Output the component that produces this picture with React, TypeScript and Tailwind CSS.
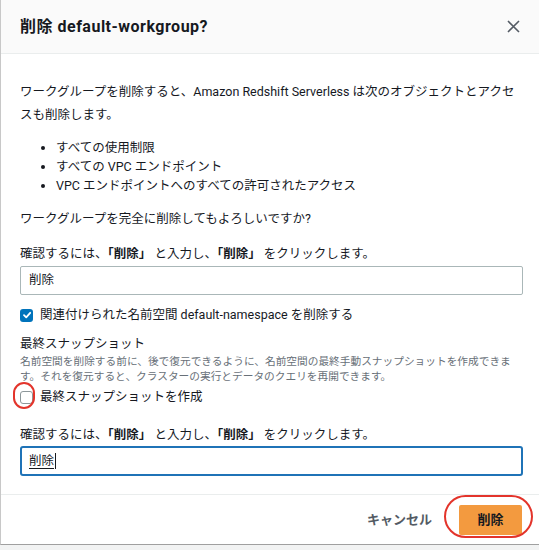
import React from "react";

const font = { fontFamily: 'Roboto, "Noto Sans CJK JP", sans-serif' };

function Check() {
  return (
    <span className="flex h-[13px] w-[13px] items-center justify-center rounded-[3px] bg-[#0073bb]">
      <svg width="10" height="10" viewBox="0 0 10 10">
        <path d="M2 5.2 L4.2 7.3 L8.2 2.8" fill="none" stroke="white" strokeWidth="1.8" strokeLinecap="round" strokeLinejoin="round" />
      </svg>
    </span>
  );
}

export default function App() {
  return (
    <div className="relative h-[550px] w-[539px] overflow-hidden bg-[#f2f3f3] text-[#16191f]" style={font}>
      <div className="flex h-[545px] flex-col border-b border-l border-b-[#a0a0a0] border-l-[#c8c8c8] bg-white">
        <div className="flex h-[54px] shrink-0 items-center justify-between border-b border-[#eaeded] bg-[#fafafa] pl-[19px] pr-[18px]">
          <h2 className="text-[16px] font-bold leading-[22px] tracking-[0.5px]">削除 default-workgroup?</h2>
          <svg width="13" height="13" viewBox="0 0 13 13" className="mr-[1px]">
            <path d="M1 1 L12 12 M12 1 L1 12" stroke="#545b64" strokeWidth="1.6" fill="none" />
          </svg>
        </div>
        <div className="flex h-[440px] flex-col whitespace-nowrap pl-[19px] pr-[16px] pt-[26px] text-[12.5px]">
          <p className="leading-[23px]">
            ワークグループを削除すると、Amazon Redshift Serverless は次のオブジェクトとアクセ
            <br />
            スも削除します。
          </p>
          <ul className="mt-[12px] list-disc pl-[36px] leading-[19px]">
            <li>すべての使用制限</li>
            <li>すべての VPC エンドポイント</li>
            <li>VPC エンドポイントへのすべての許可されたアクセス</li>
          </ul>
          <p className="mt-[12px] leading-[23px]">ワークグループを完全に削除してもよろしいですか?</p>
          <p className="mt-[13px] leading-[22px]">
            確認するには、<b>「削除」</b> と入力し、<b>「削除」</b> をクリックします。
          </p>
          <div className="mt-[1px] flex h-[29px] items-center rounded-[2px] border border-[#aab7b8] px-[8px]">削除</div>
          <div className="mt-[9px] flex h-[22px] items-center gap-[7px]">
            <Check />
            <span>関連付けられた名前空間 default-namespace を削除する</span>
          </div>
          <p className="mt-[8px] leading-[20px]">最終スナップショット</p>
          <p className="text-[10.7px] leading-[15px] text-[#687078]">
            名前空間を削除する前に、後で復元できるように、名前空間の最終手動スナップショットを作成できま
            <br />
            す。それを復元すると、クラスターの実行とデータのクエリを再開できます。
          </p>
          <div className="mt-[2px] flex h-[22px] items-center gap-[7px]">
            <span className="h-[13px] w-[13px] rounded-[3px] border border-[#8d979a] bg-white" />
            <span>最終スナップショットを作成</span>
          </div>
          <p className="mt-[16px] leading-[22px]">
            確認するには、<b>「削除」</b> と入力し、<b>「削除」</b> をクリックします。
          </p>
          <div className="mt-0 flex h-[30px] items-center rounded-[3px] border-2 border-[#1f73b7] px-[7px]">
            <span className="underline decoration-[#16191f] underline-offset-[3px]">削除</span>
            <span className="ml-[1px] h-[16px] w-[1px] bg-[#16191f]" />
          </div>
        </div>
        <div className="flex flex-1 items-center justify-end gap-[27px] border-t border-[#eaeded] pr-[17px]">
          <span className="text-[13px] font-bold text-[#545b64]">キャンセル</span>
          <span className="flex h-[30px] w-[63px] items-center justify-center rounded-[2px] bg-[#f39a3f] text-[13px] font-bold">削除</span>
        </div>
      </div>
      <div className="absolute left-[13px] top-[382px] h-[27px] w-[22px] rounded-full border-2 border-[#e3342b]" />
      <div className="absolute left-[444px] top-[495px] h-[43px] w-[89px] rounded-full border-2 border-[#e3342b]" />
    </div>
  );
}
